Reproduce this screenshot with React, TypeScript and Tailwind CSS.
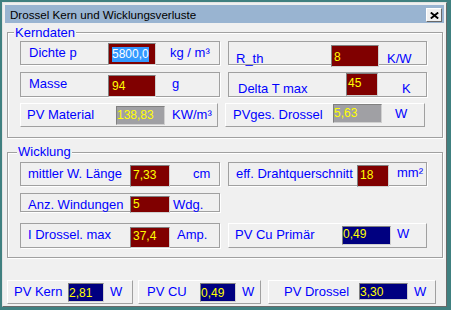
import React from "react";

const etched = "border border-[#a0a0a0] shadow-[1px_1px_0_#ffffff]";
const raised =
  "border border-t-white border-l-white border-b-[#a0a0a0] border-r-[#a0a0a0]";

type FieldProps = {
  box: string;
  label: string;
  labelCls: string;
  input: string;
  value: string;
  valueCls: string;
  unit: string;
  unitCls: string;
};

function Field({ box, label, labelCls, input, value, valueCls, unit, unitCls }: FieldProps) {
  return (
    <div className={`flex shrink-0 items-start text-[13px] leading-[15px] text-[#0000ff] ${box}`}>
      <span className={`shrink-0 whitespace-nowrap ${labelCls}`}>{label}</span>
      <div
        className={`flex shrink-0 items-start overflow-hidden border border-t-[#808080] border-l-[#808080] border-b-[#d0d0d0] border-r-[#d0d0d0] ${input}`}
      >
        <span className={`whitespace-nowrap text-[12px] leading-[14px] ${valueCls}`}>{value}</span>
      </div>
      <span className={`shrink-0 whitespace-nowrap ${unitCls}`}>{unit}</span>
    </div>
  );
}

export default function App() {
  return (
    <div className="w-[451px] h-[310px] overflow-hidden bg-[#408080] pl-[2px] pt-[2px] font-['Liberation_Sans',Arial,sans-serif]">
      <div className="flex w-[445px] h-[305px] flex-col border border-t-[#e3e3e3] border-l-[#e3e3e3] border-b-[#696969] border-r-[#696969] bg-[#f0f0f0] px-[2px] pt-[2px]">
        {/* Title bar */}
        <div className="flex h-[18px] w-full shrink-0 items-start justify-between bg-[#99b4d1]">
          <span className="ml-[5px] mt-[3px] whitespace-nowrap text-[11.6px] leading-[14px] text-black">
            Drossel Kern und Wicklungsverluste
          </span>
          <div className="mr-[2px] mt-[3px] flex h-[14px] w-[16px] items-center justify-center border border-t-white border-l-white border-b-[#696969] border-r-[#696969] bg-[#f0f0f0]">
            <svg width="9" height="7" viewBox="0 0 9 7">
              <path d="M0.8 0.5 L8.2 6.5 M8.2 0.5 L0.8 6.5" stroke="#000" strokeWidth="1.9" fill="none" />
            </svg>
          </div>
        </div>

        {/* Kerndaten */}
        <div className="relative ml-[2px] mt-[9px] h-[106px] w-[436px] shrink-0 border border-[#a0a0a0] pl-[12px] pt-[8px] shadow-[inset_1px_1px_0_#ffffff,1px_1px_0_#ffffff]">
          <span className="absolute left-[6px] top-[-8px] bg-[#f0f0f0] px-[1px] text-[13px] leading-[15px] text-[#0000ff]">
            Kerndaten
          </span>
          <div className="flex gap-[8px]">
            <Field
              box={`w-[200px] h-[24px] ${etched}`}
              label="Dichte p"
              labelCls="w-[87px] pl-[8px] mt-[3px]"
              input="w-[48px] h-[22px] mt-[1px] bg-[#800000]"
              value="5800,0"
              valueCls="ml-[3px] mt-[3px] pb-[1px] bg-[#3399ff] text-white"
              unit="kg / m³"
              unitCls="pl-[14px] mt-[3px]"
            />
            <Field
              box={`w-[199px] h-[24px] ${etched}`}
              label="R_th"
              labelCls="w-[102px] pl-[7px] mt-[9px]"
              input="w-[48px] h-[22px] mt-[3px] bg-[#800000]"
              value="8"
              valueCls="ml-[2px] mt-[4px] text-[#ffff00]"
              unit="K/W"
              unitCls="pl-[8px] mt-[9px]"
            />
          </div>
          <div className="mt-[7px] flex gap-[8px]">
            <Field
              box={`w-[200px] h-[25px] ${etched}`}
              label="Masse"
              labelCls="w-[87px] pl-[8px] mt-[3px]"
              input="w-[48px] h-[22px] mt-[2px] bg-[#800000]"
              value="94"
              valueCls="ml-[3px] mt-[3px] text-[#ffff00]"
              unit="g"
              unitCls="pl-[16px] mt-[3px]"
            />
            <Field
              box={`w-[199px] h-[25px] ${etched}`}
              label="Delta T max"
              labelCls="w-[117px] pl-[9px] mt-[8px]"
              input="w-[32px] h-[23px] mt-[0px] bg-[#800000]"
              value="45"
              valueCls="ml-[1px] mt-[2px] text-[#ffff00]"
              unit="K"
              unitCls="pl-[24px] mt-[8px]"
            />
          </div>
          <div className="mt-[6px] flex gap-[7px]">
            <Field
              box={`w-[198px] h-[24px] ${raised}`}
              label="PV Material"
              labelCls="w-[95px] pl-[6px] mt-[3px]"
              input="w-[49px] h-[19px] mt-[2px] bg-[#a0a0a4]"
              value="138,83"
              valueCls="ml-[0px] mt-[1px] text-[#ffff00]"
              unit="KW/m³"
              unitCls="pl-[7px] mt-[3px]"
            />
            <Field
              box={`w-[200px] h-[24px] ${raised}`}
              label="PVges. Drossel"
              labelCls="w-[107px] pl-[7px] mt-[3px]"
              input="w-[49px] h-[19px] mt-[0px] bg-[#a0a0a4]"
              value="5,63"
              valueCls="ml-[0px] mt-[1px] text-[#ffff00]"
              unit="W"
              unitCls="pl-[13px] mt-[2px]"
            />
          </div>
        </div>

        {/* Wicklung */}
        <div className="relative ml-[2px] mt-[14px] h-[106px] w-[436px] shrink-0 border border-[#a0a0a0] pl-[12px] pt-[9px] shadow-[inset_1px_1px_0_#ffffff,1px_1px_0_#ffffff]">
          <span className="absolute left-[9px] top-[-9px] bg-[#f0f0f0] px-[1px] text-[13px] leading-[15px] text-[#0000ff]">
            Wicklung
          </span>
          <div className="flex gap-[8px]">
            <Field
              box={`w-[200px] h-[24px] ${etched}`}
              label="mittler W. Länge"
              labelCls="w-[109px] pl-[7px] mt-[3px]"
              input="w-[40px] h-[22px] mt-[2px] bg-[#800000]"
              value="7,33"
              valueCls="ml-[2px] mt-[2px] text-[#ffff00]"
              unit="cm"
              unitCls="pl-[23px] mt-[3px]"
            />
            <Field
              box={`w-[199px] h-[24px] ${etched}`}
              label="eff. Drahtquerschnitt"
              labelCls="w-[128px] pl-[7px] mt-[3px]"
              input="w-[32px] h-[22px] mt-[2px] bg-[#800000]"
              value="18"
              valueCls="ml-[2px] mt-[2px] text-[#ffff00]"
              unit="mm²"
              unitCls="pl-[8px] mt-[2px]"
            />
          </div>
          <div className="mt-[7px] flex gap-[8px]">
            <Field
              box={`w-[200px] h-[19px] ${etched}`}
              label="Anz. Windungen"
              labelCls="w-[109px] pl-[7px] mt-[3px]"
              input="w-[40px] h-[17px] mt-[2px] bg-[#800000]"
              value="5"
              valueCls="ml-[2px] mt-[0px] text-[#ffff00]"
              unit="Wdg."
              unitCls="pl-[3px] mt-[3px]"
            />
          </div>
          <div className="mt-[11px] flex gap-[8px]">
            <Field
              box={`w-[200px] h-[25px] ${etched}`}
              label="I Drossel. max"
              labelCls="w-[109px] pl-[7px] mt-[3px]"
              input="w-[40px] h-[21px] mt-[3px] bg-[#800000]"
              value="37,4"
              valueCls="ml-[2px] mt-[1px] text-[#ffff00]"
              unit="Amp."
              unitCls="pl-[7px] mt-[3px]"
            />
            <Field
              box={`w-[199px] h-[25px] ${raised}`}
              label="PV Cu Primär"
              labelCls="w-[113px] pl-[6px] mt-[3px]"
              input="w-[49px] h-[19px] mt-[2px] bg-[#000080]"
              value="0,49"
              valueCls="ml-[0px] mt-[0px] text-[#ffff00]"
              unit="W"
              unitCls="pl-[6px] mt-[2px]"
            />
          </div>
        </div>

        {/* Bottom row */}
        <div className="ml-[2px] mt-[22px] flex shrink-0">
          <Field
            box={`w-[126px] h-[24px] ${raised}`}
            label="PV Kern"
            labelCls="w-[60px] pl-[6px] mt-[3px]"
            input="w-[36px] h-[19px] mt-[2px] bg-[#000080]"
            value="2,81"
            valueCls="ml-[0px] mt-[2px] text-[#ffff00]"
            unit="W"
            unitCls="pl-[6px] mt-[3px]"
          />
          <div className="ml-[5px]">
            <Field
              box={`w-[123px] h-[24px] ${raised}`}
              label="PV CU"
              labelCls="w-[61px] pl-[8px] mt-[3px]"
              input="w-[36px] h-[19px] mt-[2px] bg-[#000080]"
              value="0,49"
              valueCls="ml-[0px] mt-[2px] text-[#ffff00]"
              unit="W"
              unitCls="pl-[6px] mt-[3px]"
            />
          </div>
          <div className="ml-[7px]">
            <Field
              box={`w-[168px] h-[24px] ${raised}`}
              label="PV Drossel"
              labelCls="w-[90px] pl-[15px] mt-[3px]"
              input="w-[49px] h-[17px] mt-[2px] bg-[#000080]"
              value="3,30"
              valueCls="ml-[0px] mt-[1px] text-[#ffff00]"
              unit="W"
              unitCls="pl-[6px] mt-[3px]"
            />
          </div>
        </div>
      </div>
    </div>
  );
}
